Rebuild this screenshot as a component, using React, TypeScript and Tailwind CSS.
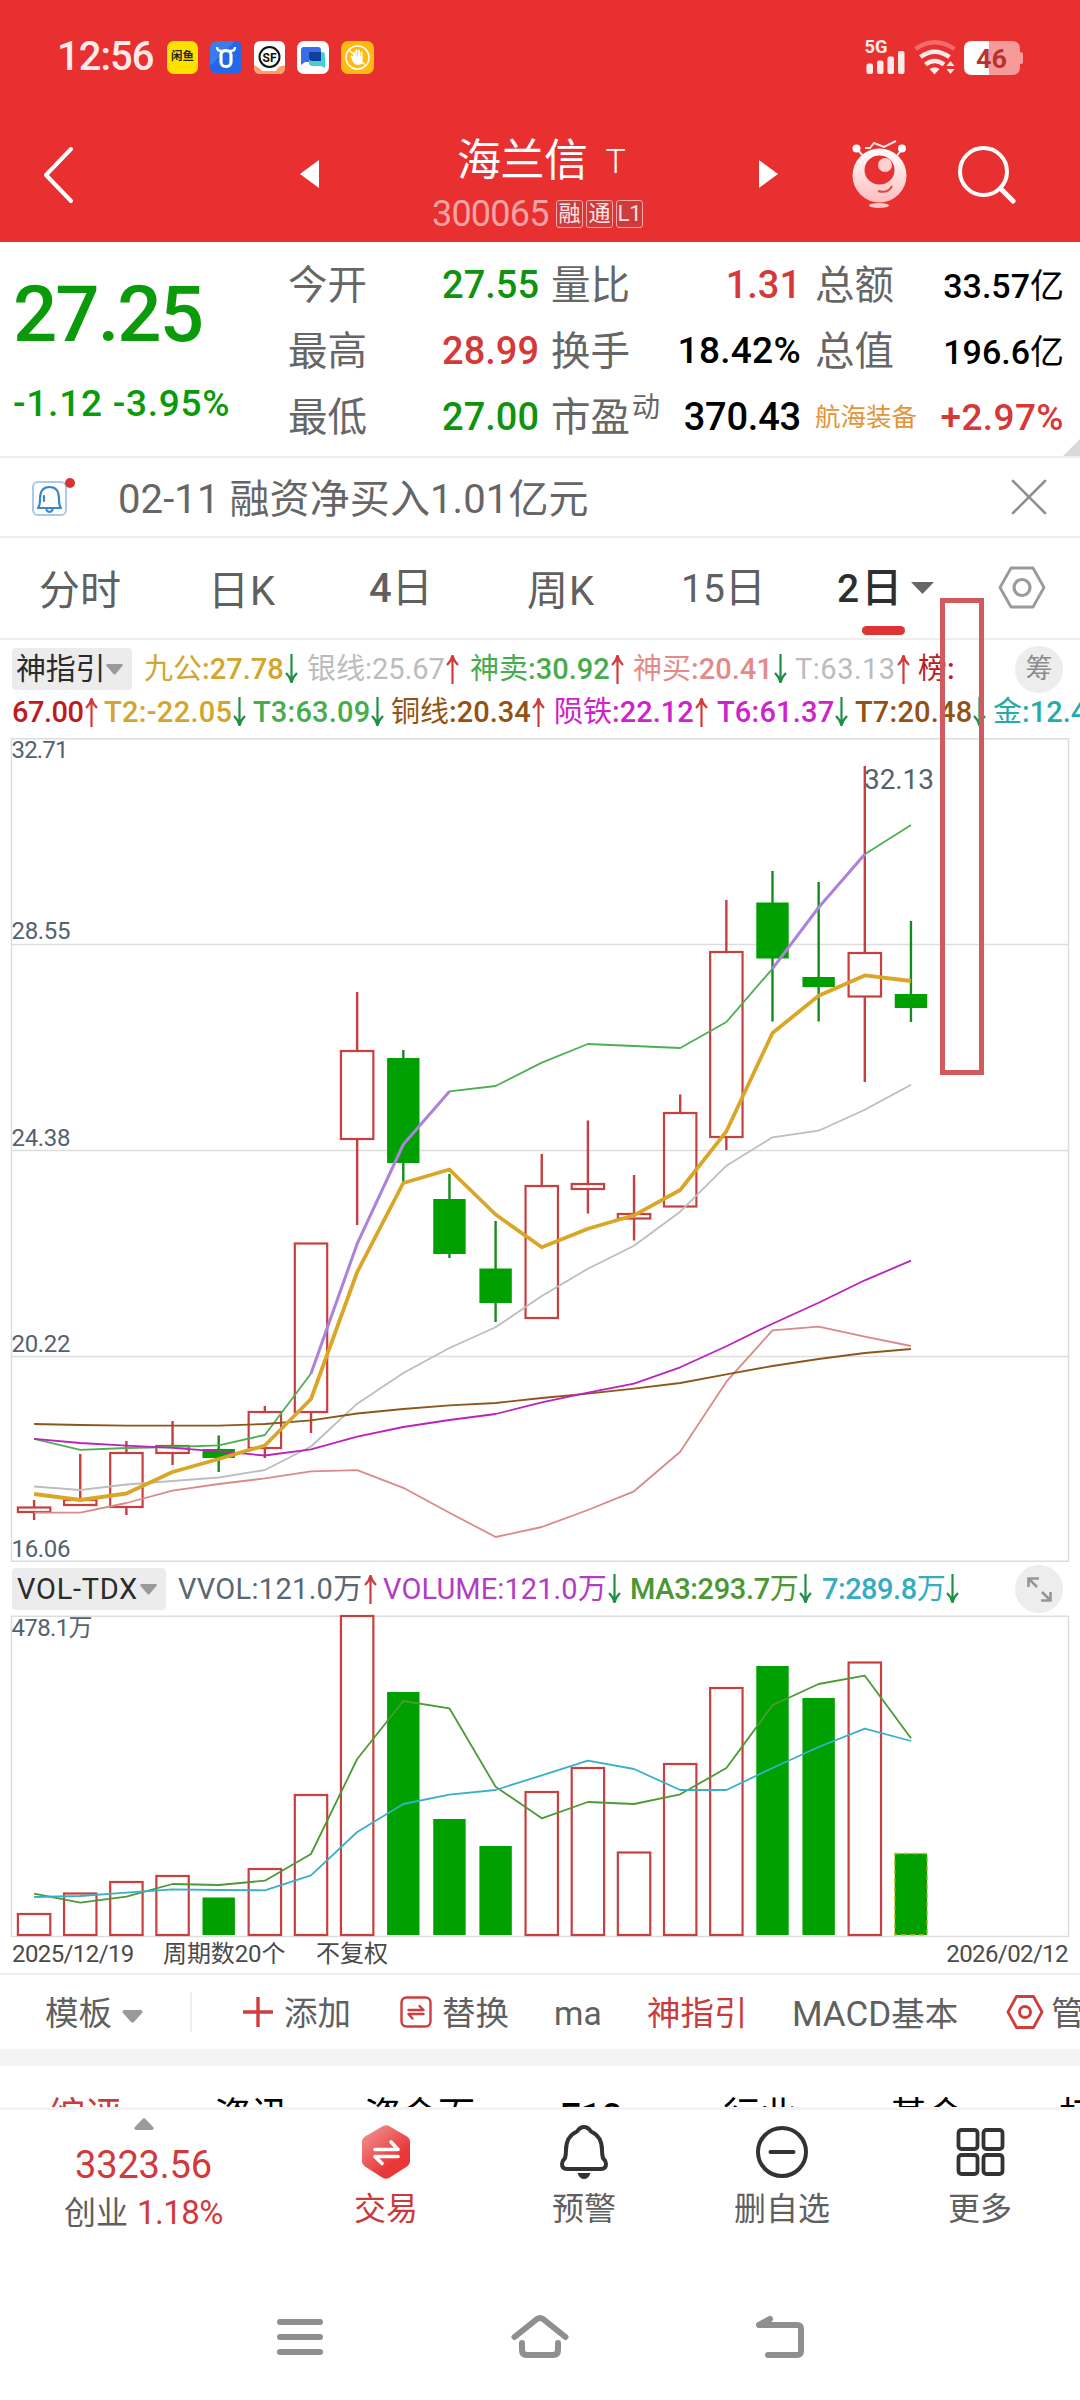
import React from "react";

const RED = "#c93f3f";
const GREEN = "#00a000";

type Candle = { up: boolean; top: number; bottom: number; high: number; low: number; vol: number };

const candles: Candle[] = [
  { up: true, top: 1507.5, bottom: 1512, high: 1500, low: 1520, vol: 1914 },
  { up: true, top: 1500, bottom: 1505, high: 1454, low: 1506, vol: 1893.5 },
  { up: true, top: 1453, bottom: 1507, high: 1441, low: 1515, vol: 1882 },
  { up: true, top: 1446, bottom: 1453, high: 1421, low: 1465, vol: 1876 },
  { up: false, top: 1449, bottom: 1458, high: 1435.5, low: 1472, vol: 1897.5 },
  { up: true, top: 1412, bottom: 1448, high: 1406, low: 1458, vol: 1869 },
  { up: true, top: 1243.5, bottom: 1412, high: 1243, low: 1433, vol: 1795 },
  { up: true, top: 1051, bottom: 1139, high: 992, low: 1225, vol: 1616 },
  { up: false, top: 1058, bottom: 1163, high: 1050, low: 1182, vol: 1692 },
  { up: false, top: 1199, bottom: 1254, high: 1174, low: 1258, vol: 1819 },
  { up: false, top: 1268.5, bottom: 1303, high: 1221, low: 1322, vol: 1846 },
  { up: true, top: 1186, bottom: 1318, high: 1154, low: 1319, vol: 1792 },
  { up: true, top: 1184, bottom: 1189, high: 1120.5, low: 1213.5, vol: 1768 },
  { up: true, top: 1214, bottom: 1218.5, high: 1175, low: 1240.5, vol: 1852.5 },
  { up: true, top: 1113, bottom: 1206.5, high: 1094.5, low: 1206.5, vol: 1764 },
  { up: true, top: 952, bottom: 1137, high: 900, low: 1150, vol: 1688 },
  { up: false, top: 902.5, bottom: 958.5, high: 871, low: 1021.5, vol: 1666 },
  { up: false, top: 977, bottom: 987, high: 882, low: 1021.5, vol: 1698 },
  { up: true, top: 953, bottom: 996.5, high: 766, low: 1082, vol: 1662.5 },
  { up: false, top: 994, bottom: 1008, high: 921, low: 1022, vol: 1853.5 },
];

const cx = (i: number) => 34.1 + 46.15 * i;
const line = (ys: number[], from = 0) => ys.map((y, i) => `${cx(i + from).toFixed(1)},${y}`).join(" ");

const gold = [1494, 1500, 1493.5, 1472, 1459, 1445.5, 1399, 1272, 1183, 1169.5, 1214.5, 1247.3, 1228.7, 1215.3, 1190, 1131.3, 1033, 995.7, 975.4, 981];
const silver = [1486.5, 1490, 1484.5, 1481, 1477.5, 1470, 1446.5, 1403.7, 1373, 1348, 1327.3, 1296, 1268.7, 1245.7, 1211.7, 1165.7, 1137.3, 1130.7, 1109.7, 1084.7];
const magenta = [1438.8, 1443, 1445.7, 1447.8, 1451.4, 1455.5, 1449.4, 1436.7, 1427, 1420, 1414, 1402.3, 1392.7, 1383.7, 1367.3, 1346.3, 1323.7, 1302.7, 1280.3, 1260.7];
const brown = [1424, 1425, 1425.7, 1425.7, 1425.7, 1424, 1420.4, 1413.5, 1409, 1405.3, 1403, 1398, 1393.7, 1388.7, 1383, 1374.3, 1366, 1359, 1353, 1349];
const pink = [1512.7, 1512.7, 1503, 1490.6, 1484, 1478.4, 1471.4, 1470.2, 1487.8, 1512.7, 1537, 1527, 1510, 1491.3, 1451.7, 1381.7, 1330.3, 1326.7, 1336.7, 1346];
const leaf = [1438.8, 1449.8, 1448, 1447, 1445.3, 1435, 1373.5, 1243.7, 1144.5, 1091.4, 1086, 1062.6, 1044, 1046, 1048, 1022, 968.6, 907.5, 854.3, 825];
const volMa3 = [1893.7, 1902.7, 1896.7, 1884, 1885, 1880.7, 1854, 1759, 1701, 1708.3, 1786.7, 1818.3, 1802, 1804, 1794.3, 1768, 1705.3, 1684, 1675.7, 1738.3];
const volMa7 = [1897, 1896, 1892.7, 1889.3, 1890, 1890.3, 1875.3, 1832, 1804, 1794.7, 1790, 1775.3, 1760.7, 1769, 1790, 1790, 1768, 1747, 1728.7, 1741];

function Arrow({ up }: { up: boolean }) {
  return (
    <svg className="ml-[1px] h-[30px] w-[13px] shrink-0" viewBox="0 0 13 30" fill="none" strokeWidth="2.200" stroke={up ? "#d23b3b" : "#1f8f45"}>
      <path d={up ? "M6.5 30V1M1 11C4 8 5.8 5 6.5 1.5C7.2 5 9 8 12 11" : "M6.5 0V29M1 19C4 22 5.8 25 6.5 28.5C7.2 25 9 22 12 19"} />
    </svg>
  );
}

type IndicatorProps = { name?: string; value: string; unit?: string; up?: boolean; box: string; color: string };

function Indicator({ name, value, unit, up, box, color }: IndicatorProps) {
  return (
    <div className={`flex h-[42px] shrink-0 items-center whitespace-nowrap ${box} ${color}`}>
      <span>
        {name && <span className="font-normal">{name}</span>}
        {value}
        {unit && <span className="font-normal">{unit}</span>}
      </span>
      {up !== undefined && <Arrow up={up} />}
    </div>
  );
}

function StatusBar() {
  return (
    <div className="flex h-[114px] items-center pl-[57px] text-white">
      <span className="w-[110px] text-[40px] font-medium leading-none tracking-[-1px] text-[#ffe9e9]">12:56</span>
      <div className="flex items-center gap-[12px]">
        <span className="flex h-[33px] w-[31px] items-center justify-center rounded-[7px] bg-[#ffe100] text-[11.500px] font-bold leading-none text-[#222]">闲鱼</span>
        <svg className="h-[33px] w-[32px]" viewBox="0 0 32 33">
          <rect width="32" height="33" rx="7" fill="#2468e8" />
          <path d="M0 7a7 7 0 0 1 7-7h18L0 25Z" fill="#4a88f0" opacity=".6" />
          <path d="M7 6q0 4 4 4h10q4 0 4-4" fill="none" stroke="#fff" strokeWidth="2.400" />
          <rect x="11" y="9.500" width="10" height="16" rx="4.500" fill="none" stroke="#fff" strokeWidth="3.200" />
        </svg>
        <svg className="h-[33px] w-[31px]" viewBox="0 0 31 33">
          <rect width="31" height="33" rx="6" fill="#fff" />
          <path d="M0 24q6 3 8 6h14q3-6 9-5v2a6 6 0 0 1-6 6H6a6 6 0 0 1-6-6Z" fill="#ff9d6b" />
          <circle cx="15.500" cy="16" r="10" fill="#fff" stroke="#111" strokeWidth="2" />
          <text x="15.500" y="20.500" textAnchor="middle" fontSize="12" fontWeight="700" fill="#111">SF</text>
        </svg>
        <svg className="h-[33px] w-[32px]" viewBox="0 0 32 33">
          <rect width="32" height="33" rx="7" fill="#fff" />
          <path d="M4 9q0-3 3-3h14q3 0 3 3v12H8l-4 3Z" fill="#3a6ee8" />
          <path d="M12 11h13q3 0 3 3v13l-4-2H15q-3 0-3-3Z" fill="#42d0d4" />
          <path d="M12 11h12v9H15q-3 0-3-3Z" fill="#123f9c" />
        </svg>
        <svg className="h-[33px] w-[33px]" viewBox="0 0 33 33">
          <rect width="33" height="33" rx="7" fill="#ffb90f" />
          <circle cx="16.500" cy="16.500" r="11.500" fill="none" stroke="#fff" strokeWidth="1.600" />
          <path d="M13 17v-5.500M15.400 15V9.500M18 15V9.500M20.500 17v-5.500M12 17l-1.500-1.500" stroke="#fff" strokeWidth="1.900" strokeLinecap="round" />
          <path d="M12 15h9.500v5q0 4-4.700 4-3.800 0-6.300-6Z" fill="#fff" />
          <path d="M8.500 9.500l15 14" stroke="#fff" strokeWidth="1.300" />
        </svg>
      </div>
      <svg className="ml-[490px] h-[40px] w-[160px]" viewBox="865 36 160 40">
        <text x="865.500" y="52" fontSize="18" fontWeight="700" fill="#ffeaea" textLength="23" lengthAdjust="spacingAndGlyphs">5G</text>
        <g fill="#ffeaea">
          <rect x="867.500" y="62.500" width="6.500" height="10.500" rx="2" />
          <rect x="878" y="59.500" width="6.500" height="13.500" rx="2" />
          <rect x="888.500" y="55.500" width="6.500" height="17.500" rx="2" />
          <rect x="899" y="50" width="6.500" height="23" rx="2" />
          <path d="M930.500 68q5.500-3.500 10 0l-5 5.500ZM947.500 65l4-5 4 5ZM947.500 68l4 5 4-5Z" />
        </g>
        <g fill="none" stroke="#ffeaea" strokeWidth="4.500">
          <path d="M916.500 48q19-13.500 39 0" stroke="#f36a6a" />
          <path d="M921.500 56q14-10.500 29 0M926.500 63.500q9-7 18.500 0" />
        </g>
        <path d="M990 40h23q8 0 8 8v3q3 0 3 2v8q0 2-3 2v3q0 8-8 8h-23Z" fill="#f79a9a" />
        <path d="M990 40v34h-17q-8 0-8-8V48q0-8 8-8Z" fill="#fff" />
        <text x="977" y="67" fontSize="26" fontWeight="700" fill="#b83232" textLength="31" lengthAdjust="spacingAndGlyphs">46</text>
      </svg>
    </div>
  );
}

function TitleBar() {
  return (
    <div className="flex h-[128px] items-start">
      <svg className="ml-[42px] mt-[32px] h-[58px] w-[34px]" viewBox="0 0 34 58" fill="none" stroke="#fff" strokeWidth="4" strokeLinecap="round" strokeLinejoin="round">
        <path d="M29 3 4 29l25 26" />
      </svg>
      <svg className="ml-[223px] mt-[46px] h-[28px] w-[20px]" viewBox="0 0 20 28">
        <path d="M1 14 20 0v28Z" fill="#fff" />
      </svg>
      <div className="ml-[113px] mt-[24px] w-[217px]">
        <div className="flex items-center pl-[25px] leading-none text-white">
          <span className="text-[44px] leading-[46px] tracking-[-0.500px]">海兰信</span>
          <span className="ml-[18px] text-[34px] font-light">T</span>
        </div>
        <div className="mt-[12px] flex h-[36px] items-center">
          <span className="w-[124px] text-[36px] leading-none tracking-[-0.800px] text-[#f5a3a3]">300065</span>
          <div className="flex gap-[3px] text-[22px] leading-none text-[#ffe3e3]">
            {["融", "通", "L1"].map((t) => (
              <span key={t} className="flex h-[28px] w-[27px] items-center justify-center rounded-[3px] border border-[#f0a8a8] bg-[#cf3a3a]">{t}</span>
            ))}
          </div>
        </div>
      </div>
      <svg className="ml-[110px] mt-[46px] h-[28px] w-[20px]" viewBox="0 0 20 28">
        <path d="M19 14 0 0v28Z" fill="#fff" />
      </svg>
      <svg className="ml-[71px] mt-[26px] h-[70px] w-[58px]" viewBox="850 140 58 70">
        <defs>
          <linearGradient id="face" x1="0" y1="0" x2="0" y2="1">
            <stop offset="0" stopColor="#fff" />
            <stop offset="1" stopColor="#ffbdbd" />
          </linearGradient>
        </defs>
        <g stroke="#ffe2e2" strokeWidth="2" fill="none">
          <path d="M857 149l7 8M902 149l-6 8M865 148h5l4-5 10 4 12-6" />
        </g>
        <circle cx="856.500" cy="148.500" r="4" fill="#fff" />
        <circle cx="902" cy="148.500" r="4" fill="#fff" />
        <circle cx="879.500" cy="175.500" r="27" fill="url(#face)" />
        <ellipse cx="879.500" cy="170" rx="15" ry="14.500" fill="#e83030" />
        <circle cx="885" cy="165" r="7" fill="#ffd0d0" />
        <path d="M878 191q10 3 14-5" fill="none" stroke="#e04848" strokeWidth="2" />
        <ellipse cx="879" cy="205.500" rx="10" ry="2.500" fill="#ffc6c6" />
      </svg>
      <svg className="ml-[48px] mt-[30px] h-[60px] w-[62px]" viewBox="956 144 62 60" fill="none" stroke="#fff">
        <circle cx="983.500" cy="171.500" r="23.500" strokeWidth="4" />
        <path d="M1000.500 188.500 1013 201" strokeWidth="5" strokeLinecap="round" />
      </svg>
    </div>
  );
}

function Quote() {
  const label = "text-[39.500px] leading-none text-[#666666] font-normal";
  const row = "flex items-center justify-between whitespace-nowrap";
  return (
    <section className="relative flex h-[216px] border-b-2 border-[#eeeeee] font-medium">
      <div className="w-[288px] pl-[13px] text-[#0a9a0a]">
        <div className="mt-[34px] text-[78px] leading-none tracking-[-2px]">27.25</div>
        <div className="mt-[31px] whitespace-nowrap text-[37px] leading-none tracking-[0.750px]">-1.12 -3.95%</div>
      </div>
      <div className="grid w-[251px] grid-rows-[66px_66px_66px] pt-[11px]">
        <div className={row}><span className={label}>今开</span><span className="pb-[3px] text-[38px] leading-none text-[#0f930f]">27.55</span></div>
        <div className={row}><span className={label}>最高</span><span className="pb-[3px] text-[38px] leading-none text-[#d63838]">28.99</span></div>
        <div className={row}><span className={label}>最低</span><span className="pb-[3px] text-[38px] leading-none text-[#0f930f]">27.00</span></div>
      </div>
      <div className="ml-[12px] grid w-[250px] grid-rows-[66px_66px_66px] pt-[11px]">
        <div className={row}><span className={label}>量比</span><span className="pb-[3px] text-[38px] leading-none text-[#d63838]">1.31</span></div>
        <div className={row}><span className={label}>换手</span><span className="pb-[3px] text-[37px] leading-none tracking-[0.300px] text-black">18.42%</span></div>
        <div className={row}>
          <span className={label}>市盈<span className="relative -top-[14px] ml-[2px] text-[28px]">动</span></span>
          <span className="pb-[2px] text-[38px] leading-none tracking-[-0.200px] text-black">370.43</span>
        </div>
      </div>
      <div className="ml-[14px] grid w-[249px] grid-rows-[66px_66px_66px] pt-[11px]">
        <div className={row}><span className={label}>总额</span><span className="pb-[1px] text-[34px] leading-none text-black">33.57<span className="font-normal">亿</span></span></div>
        <div className={row}><span className={label}>总值</span><span className="pb-[1px] text-[34px] leading-none text-black">196.6<span className="font-normal">亿</span></span></div>
        <div className={row}><span className="text-[25.500px] font-normal leading-none text-[#e2943a]">航海装备</span><span className="pb-[2px] text-[37px] leading-none tracking-[0.400px] text-[#d63838]">+2.97%</span></div>
      </div>
      <svg className="absolute bottom-0 right-0 h-[17px] w-[17px]" viewBox="0 0 17 17"><path d="M17 0v17H0Z" fill="#d8d8d8" /></svg>
    </section>
  );
}

function Notice() {
  return (
    <section className="flex h-[80px] items-center border-b-2 border-[#eeeeee] pl-[30px] text-[#666666]">
      <svg className="h-[42px] w-[48px]" viewBox="0 0 48 42" fill="none">
        <rect x="3" y="6" width="33" height="33" rx="5" stroke="#a9c8ee" strokeWidth="2" />
        <path d="M8 32q2-2 2-9 0-12 9.500-12T29 23q0 7 2 9ZM16.500 34q3 4 6 0M14 20v5" stroke="#3b86c8" strokeWidth="2.200" strokeLinejoin="round" strokeLinecap="round" />
        <circle cx="40" cy="7" r="5" fill="#d93434" />
      </svg>
      <span className="ml-[40px] w-[880px] whitespace-nowrap pt-[5px] text-[40px] leading-none tracking-[0.100px]">02-11 融资净买入1.01亿元</span>
      <svg className="ml-[13px] h-[36px] w-[36px]" viewBox="0 0 36 36" stroke="#8f8f8f" strokeWidth="2.600" strokeLinecap="round"><path d="M2 2l32 32M34 2 2 34" /></svg>
    </section>
  );
}

function PeriodTabs() {
  return (
    <section className="flex h-[102px] items-center whitespace-nowrap border-b-2 border-[#eeeeee] text-[41px] leading-none text-[#606060]">
      <span className="ml-[39px] w-[169px] pt-[6px]">分时</span>
      <span className="w-[161px] pt-[6px]">日<span className="ml-[1px] text-[40px]">K</span></span>
      <span className="w-[158px]"><span className="text-[40px] font-medium">4</span>日</span>
      <span className="w-[154px] pt-[6px]">周<span className="ml-[1px] text-[40px]">K</span></span>
      <span className="w-[156px]"><span className="text-[39px]">15</span>日</span>
      <div className="relative flex w-[161px] items-center font-medium text-[#2e2e2e]">
        <span><span className="text-[39px]">2</span><span className="ml-[2px]">日</span></span>
        <svg className="ml-[9px] h-[12px] w-[23px]" viewBox="0 0 23 12"><path d="M0 0h23L11.500 12Z" fill="#666" /></svg>
        <span className="absolute left-[25px] top-[58px] h-[9px] w-[43px] rounded-full bg-[#e03333]" />
      </div>
      <svg className="h-[44px] w-[48px]" viewBox="0 0 48 44" fill="none" stroke="#9a9a9a" strokeWidth="2.800" strokeLinejoin="round">
        <path d="M13 2h22l11 19.500L35 41H13L2 21.500Z" />
        <circle cx="24" cy="21.500" r="8" strokeWidth="3.200" />
      </svg>
    </section>
  );
}

function DropTri() {
  return <svg className="h-[11px] w-[17px] shrink-0" viewBox="0 0 17 11"><path d="M1 0h15q1.500 1 0 2.500L9.500 10q-1 1-2 0L1 2.500Q-.5 1 1 0Z" fill="#9a9a9a" /></svg>;
}

function IndicatorRows() {
  return (
    <section className="h-[98px] overflow-hidden pt-[8px] text-[29px] font-medium leading-none">
      <div className="flex h-[42px] items-center">
        <div className="ml-[12px] flex h-[42px] w-[120px] shrink-0 items-center whitespace-nowrap rounded-[4px] bg-[#ececec] pl-[4px] text-[30px] font-normal text-[#2b2b2b]">
          <span className="w-[90px] shrink-0 tracking-[-0.300px]">神指引</span>
          <DropTri />
        </div>
        <div className="ml-[12px] flex w-[871px] shrink-0">
          <Indicator name="九公" value=":27.78" up={false} box="w-[163px]" color="text-[#d3a52c]" />
          <Indicator name="银线" value=":25.67" up box="w-[163px]" color="text-[#bcbcbc] font-normal" />
          <Indicator name="神卖" value=":30.92" up box="w-[163px]" color="text-[#46ac4c]" />
          <Indicator name="神买" value=":20.41" up={false} box="w-[162px]" color="text-[#e48a88]" />
          <Indicator value="T:63.13" up box="w-[123px]" color="text-[#bcbcbc] tracking-[0.500px] font-normal" />
          <Indicator name="榜" value=":" box="w-[60px]" color="text-[#bd1c1c]" />
        </div>
        <span className="flex h-[47px] w-[48px] shrink-0 items-center justify-center rounded-full bg-[#ededed] text-[27px] font-normal text-[#8c8c8c]">筹</span>
      </div>
      <div className="flex h-[44px] items-center pl-[12px]">
        <Indicator value="67.00" up box="w-[92px] tracking-[-0.500px]" color="text-[#bd1c1c]" />
        <Indicator value="T2:-22.05" up={false} box="w-[149px]" color="text-[#d3a52c] tracking-[0.300px]" />
        <Indicator value="T3:63.09" up={false} box="w-[138px]" color="text-[#46ac4c] tracking-[0.200px]" />
        <Indicator name="铜线" value=":20.34" up box="w-[163px]" color="text-[#935214]" />
        <Indicator name="陨铁" value=":22.12" up box="w-[163px]" color="text-[#cd22cd]" />
        <Indicator value="T6:61.37" up={false} box="w-[138px]" color="text-[#cd22cd] tracking-[0.200px]" />
        <Indicator value="T7:20.48" up={false} box="w-[138px]" color="text-[#935214] tracking-[0.200px]" />
        <Indicator name="金" value=":12.43" box="w-[160px]" color="text-[#26abab]" />
      </div>
    </section>
  );
}

function PriceChart() {
  return (
    <svg className="block h-[824px] w-full" viewBox="0 738 1080 824">
      <g stroke="#dddddd" strokeWidth="1.500" fill="none">
        <path d="M11.500 738.800H1068.500V1561.200H11.500ZM11.500 944.500H1068.500M11.500 1150.500H1068.500M11.500 1356.500H1068.500" />
      </g>
      {candles.map((c, i) => (
        <g key={i} stroke={c.up ? RED : GREEN} strokeWidth="2.400">
          {c.up ? (
            <>
              <path d={`M${cx(i)} ${c.high}V${c.top}M${cx(i)} ${c.bottom}V${c.low}`} />
              <rect x={cx(i) - 16.2} y={c.top} width="32.400" height={c.bottom - c.top} fill="none" strokeWidth="2.200" />
            </>
          ) : (
            <>
              <path d={`M${cx(i)} ${c.high}V${c.low}`} stroke="#148c1c" />
              <rect x={cx(i) - 16.2} y={c.top} width="32.400" height={c.bottom - c.top} fill={GREEN} stroke="none" />
            </>
          )}
        </g>
      ))}
      <g fill="none" strokeWidth="1.800" strokeLinejoin="round">
        <polyline points={line(silver)} stroke="#bdbdbd" />
        <polyline points={line(leaf)} stroke="#4fae52" />
        <polyline points={line(pink)} stroke="#da8a88" />
        <polyline points={line(brown)} stroke="#8d571c" />
        <polyline points={line(magenta)} stroke="#bb22bd" />
        <polyline points={line(leaf.slice(6, 10), 6)} stroke="#ad82dc" strokeWidth="3" />
        <polyline points={line(leaf.slice(16, 19), 16)} stroke="#ad82dc" strokeWidth="3" />
        <polyline points={line(gold)} stroke="#daa628" strokeWidth="3.800" />
      </g>
      <g fill="#54626f" fontSize="24">
        <text x="11.500" y="758" textLength="57">32.71</text>
        <text x="11.500" y="939" textLength="59">28.55</text>
        <text x="11.500" y="1145.500" textLength="59">24.38</text>
        <text x="11.500" y="1351.500" textLength="59">20.22</text>
        <text x="11.500" y="1557" textLength="59">16.06</text>
        <text x="864" y="788.500" fontSize="28" textLength="70">32.13</text>
      </g>
    </svg>
  );
}

function VolumeHeader() {
  return (
    <section className="flex h-[54px] items-center text-[29px] leading-none">
      <div className="ml-[12px] flex h-[42px] w-[154px] items-center rounded-[4px] bg-[#ececec] pl-[5px] text-[#2b2b2b]">
        <span className="w-[123px] tracking-[0.700px]">VOL-TDX</span>
        <DropTri />
      </div>
      <div className="ml-[12px] flex w-[837px]">
        <Indicator value="VVOL:121.0" unit="万" up box="w-[205px]" color="text-[#5a6670] tracking-[0.300px]" />
        <Indicator value="VOLUME:121.0" unit="万" up={false} box="w-[247px]" color="text-[#b33cc4] tracking-[0.100px]" />
        <Indicator value="MA3:293.7" unit="万" up={false} box="w-[192px]" color="text-[#4a9733] tracking-[-0.350px] font-medium" />
        <Indicator value="7:289.8" unit="万" up={false} box="w-[150px]" color="text-[#36abc4] tracking-[-0.500px] font-medium" />
      </div>
      <span className="flex h-[48px] w-[48px] items-center justify-center rounded-full bg-[#ededed]">
        <svg className="h-[25px] w-[25px]" viewBox="0 0 25 25" fill="none" stroke="#969696" strokeWidth="2.600">
          <path d="M1.500 10V1.500H12M2 2l8 8M23.500 15v8.500H14M23 23l-8-8" />
        </svg>
      </span>
    </section>
  );
}

function VolumeChart() {
  return (
    <svg className="block h-[322px] w-full" viewBox="0 1616 1080 322" overflow="visible">
      <path d="M11.500 1616.200H1068.500V1936.600H11.500Z" stroke="#dddddd" strokeWidth="1.500" fill="none" />
      {candles.map((c, i) => {
        const last = i === candles.length - 1;
        return c.up ? (
          <rect key={i} x={cx(i) - 16.2} y={c.vol} width="32.400" height={1935 - c.vol} fill="none" stroke={RED} strokeWidth="2.200" />
        ) : (
          <rect key={i} x={cx(i) - 16.2} y={c.vol} width="32.400" height={1935 - c.vol} fill={GREEN} stroke={last ? "#d6b41e" : "none"} strokeWidth="1.300" strokeDasharray="5 4" />
        );
      })}
      <g fill="none" strokeWidth="1.800" strokeLinejoin="round">
        <polyline points={line(volMa3)} stroke="#4c9a34" />
        <polyline points={line(volMa7)} stroke="#39b0c8" />
      </g>
      <text x="11.500" y="1635.500" fontSize="24" fill="#54626f" textLength="81">478.1万</text>
    </svg>
  );
}

function Toolbar() {
  return (
    <section className="flex h-[76px] items-center overflow-hidden whitespace-nowrap border-t-2 border-[#eeeeee] text-[33.500px] leading-none text-[#606060]">
      <span className="ml-[45px] w-[77px] shrink-0 pt-[4px]">模板</span>
      <svg className="mt-[8px] h-[13px] w-[21px] shrink-0" viewBox="0 0 21 13"><path d="M2 0h17q2.500 1 1 3l-8 9q-1.500 1.500-3 0L1 3Q-.5 1 2 0Z" fill="#9a9a9a" /></svg>
      <span className="ml-[47px] h-[40px] w-[2px] shrink-0 bg-[#ededed]" />
      <svg className="ml-[50px] h-[32px] w-[32px] shrink-0" viewBox="0 0 32 32" stroke="#d23c3c" strokeWidth="3.400"><path d="M16 1v30M1 16h30" /></svg>
      <span className="ml-[10px] w-[116px] shrink-0 pt-[4px]">添加</span>
      <svg className="h-[32px] w-[32px] shrink-0" viewBox="0 0 32 32" fill="none" stroke="#d23c3c" strokeWidth="2.400" strokeLinecap="round" strokeLinejoin="round">
        <rect x="1.500" y="1.500" width="29" height="29" rx="5" />
        <path d="M8.500 14h15l-4-4M23.500 18h-15l4 4.500" />
      </svg>
      <span className="ml-[10px] w-[112px] shrink-0 pt-[4px]">替换</span>
      <span className="w-[93px] shrink-0 pt-[4px]">ma</span>
      <span className="w-[145px] shrink-0 pt-[4px] text-[#c83c3c]">神指引</span>
      <span className="w-[214px] shrink-0 pt-[4px]"><span className="text-[35px]">MACD</span>基本</span>
      <svg className="h-[36px] w-[38px] shrink-0" viewBox="0 0 38 36" fill="none" stroke="#d23c3c" strokeWidth="2.800" strokeLinejoin="round">
        <path d="M10.500 2.500h17L36 18l-8.500 15.500h-17L2 18Z" />
        <circle cx="19" cy="18" r="5.500" strokeWidth="3" />
      </svg>
      <span className="ml-[7px] shrink-0 pt-[4px]">管理</span>
    </section>
  );
}

function SectionTabs() {
  return (
    <section className="flex h-[41px] overflow-hidden whitespace-nowrap pt-[31px] text-[37px] leading-[40px] text-black">
      <span className="ml-[48px] w-[166px] shrink-0 text-[#c83c3c]">综评</span>
      <span className="w-[150px] shrink-0">资讯</span>
      <span className="w-[196px] shrink-0">资金面</span>
      <span className="w-[163px] shrink-0 font-medium">F10</span>
      <span className="w-[167px] shrink-0">行业</span>
      <span className="w-[169px] shrink-0">基金</span>
      <span className="shrink-0">打新</span>
    </section>
  );
}

function BottomNav() {
  const item = "flex w-[198px] flex-col items-center pt-[14px] text-[32px] leading-none text-[#5f5f5f]";
  return (
    <nav className="flex h-[150px] border-t-[3px] border-[#f3f3f3]">
      <div className="flex w-[287px] flex-col items-center pt-[8px] leading-none text-[#d03a3a]">
        <svg className="h-[12px] w-[20px]" viewBox="0 0 20 12"><path d="M2 12h16q3-1 1-3l-7.500-8q-1.500-1.500-3 0L1 9q-2 2 1 3Z" fill="#9a9a9a" /></svg>
        <span className="mt-[16px] text-[38px] tracking-[-0.200px]">3323.56</span>
        <span className="mt-[12px] whitespace-nowrap text-[32px]"><span className="text-[#5f5f5f]">创业</span><span className="ml-[9px] text-[33px] tracking-[-0.500px]">1.18%</span></span>
      </div>
      <div className={item}>
        <svg className="h-[56px] w-[50px]" viewBox="0 0 50 56">
          <defs>
            <linearGradient id="trade" x1="0" y1="0" x2=".8" y2="1">
              <stop offset="0" stopColor="#f29a9a" />
              <stop offset=".75" stopColor="#e93636" />
            </linearGradient>
          </defs>
          <path d="M22 2q3-1.500 6 0l18 10.500q3 2 3 5v20q0 3-3 5L28 54q-3 1.500-6 0L4 42.500q-3-2-3-5v-20q0-3 3-5Z" fill="url(#trade)" />
          <path d="M14 25.500h23L30 18M37 32.500H14l7 7" fill="none" stroke="#fff" strokeWidth="3.600" strokeLinecap="round" strokeLinejoin="round" />
        </svg>
        <span className="mt-[13px] text-[#c93a3a]">交易</span>
      </div>
      <div className={item}>
        <svg className="h-[56px] w-[48px]" viewBox="0 0 48 56" fill="none" stroke="#333" strokeWidth="4" strokeLinejoin="round">
          <path d="M24 3q4 0 7 4.500 11 5 11 18.500 0 5 1 8 3 3 3 6 0 5-5 5H7q-5 0-5-5 0-3 3-6 1-3 1-8Q6 12.500 17 7.500 20 3 24 3Z" />
          <path d="M17.500 49h13q-2 6-6.500 6t-6.500-6Z" fill="#333" stroke="none" />
        </svg>
        <span className="mt-[13px]">预警</span>
      </div>
      <div className={item}>
        <svg className="h-[56px] w-[54px]" viewBox="0 0 54 56" fill="none" stroke="#333" strokeWidth="4" strokeLinecap="round">
          <circle cx="27" cy="28" r="24" />
          <path d="M15.500 28h23" />
        </svg>
        <span className="mt-[13px]">删自选</span>
      </div>
      <div className={item}>
        <svg className="h-[56px] w-[50px]" viewBox="0 0 50 56" fill="none" stroke="#333" strokeWidth="3.800">
          <rect x="3.500" y="6" width="19" height="19" rx="3" />
          <rect x="28.500" y="6" width="19" height="19" rx="3" />
          <rect x="3.500" y="31" width="19" height="19" rx="3" />
          <rect x="28.500" y="31" width="19" height="19" rx="3" />
        </svg>
        <span className="mt-[13px]">更多</span>
      </div>
    </nav>
  );
}

function SystemNav() {
  return (
    <div className="flex h-[143px] justify-center gap-[180px] pt-[54px]">
      <svg className="h-[50px] w-[60px]" viewBox="270 2311 60 50" stroke="#8f8f8f" strokeWidth="6" strokeLinecap="round"><path d="M280 2322h40M280 2337h40M280 2352h40" /></svg>
      <svg className="h-[50px] w-[60px]" viewBox="510 2311 60 50" fill="none" stroke="#8f8f8f" strokeWidth="6" strokeLinecap="round" strokeLinejoin="round">
        <path d="M514.500 2337 537 2319q3-2 6 0l22.500 18M522 2343v7q0 5 5 5h26q5 0 5-5v-7" />
      </svg>
      <svg className="h-[50px] w-[60px]" viewBox="750 2311 60 50" fill="none" stroke="#8f8f8f" strokeWidth="6" strokeLinecap="round" strokeLinejoin="round">
        <path d="M770 2319l-11 6h38q4 0 4 4v22q0 4-4 4h-29" />
      </svg>
    </div>
  );
}

export default function App() {
  return (
    <div className="relative h-[2400px] w-[1080px] overflow-hidden bg-white font-['Roboto','Noto_Sans_CJK_SC',sans-serif]">
      <header className="h-[242px] bg-[#e83030]">
        <StatusBar />
        <TitleBar />
      </header>
      <Quote />
      <Notice />
      <PeriodTabs />
      <IndicatorRows />
      <PriceChart />
      <VolumeHeader />
      <VolumeChart />
      <div className="flex h-[35px] items-center pb-[4px] pl-[12px] pr-[12px] text-[24px] leading-none text-[#4a4a4a]">
        <span className="w-[151px] tracking-[-0.600px]">2025/12/19</span>
        <span className="w-[153px] tracking-[-0.100px]">周期数20个</span>
        <span>不复权</span>
        <span className="ml-auto tracking-[-0.600px]">2026/02/12</span>
      </div>
      <Toolbar />
      <div className="h-[17px] bg-[#f4f4f4]" />
      <SectionTabs />
      <BottomNav />
      <SystemNav />
      <div className="absolute left-[940px] top-[598px] h-[477px] w-[44px] border-[5px] border-[#d05a5e]" />
    </div>
  );
}
